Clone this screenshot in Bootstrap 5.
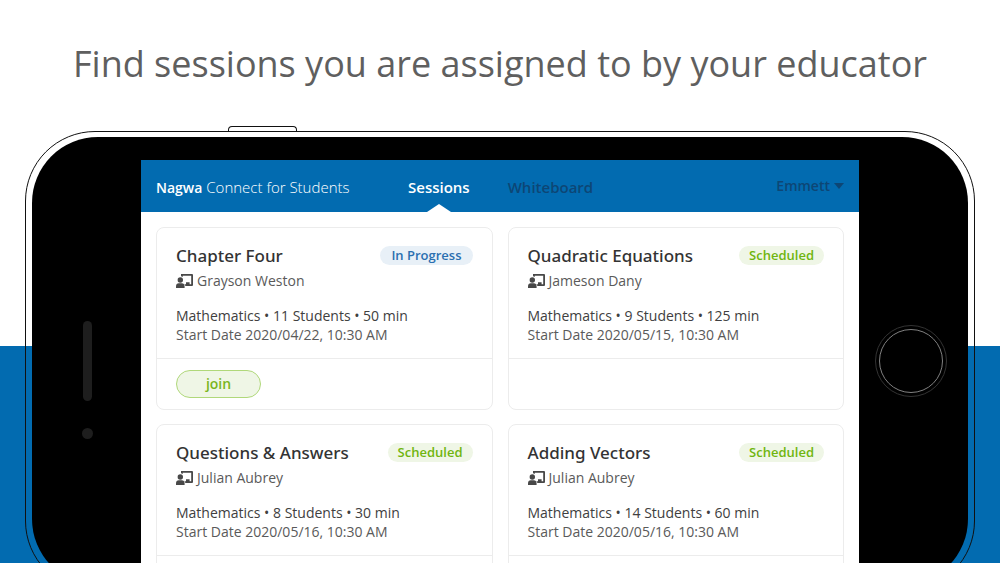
<!DOCTYPE html>
<html lang="en">
<head>
<meta charset="utf-8">
<meta name="viewport" content="width=device-width, initial-scale=1">
<title>Nagwa Connect for Students</title>
<link href="https://cdn.jsdelivr.net/npm/bootstrap@5.3.0/dist/css/bootstrap.min.css" rel="stylesheet">
<style>
  :root { --brand-blue: #026bb0; --line: #ececec; }
  body { font-family: "Open Sans", "Noto Sans", sans-serif; color: #333; }
  .stage { background: linear-gradient(#fff 346px, var(--brand-blue) 346px); }
  .headline { font-size: 36px; line-height: 48px; color: #5f5f5f; padding: 40px 0 38px; }
  .power-key { width: 69px; height: 5px; margin-left: 228px; border: 1px solid #111; border-bottom: 0; border-radius: 4px 4px 0 0; background: #fff; }
  .phone { margin: 0 25px; height: 460px; border: 1px solid #111; border-radius: 70px; padding: 5px 6px; }
  .phone-face { background: #000; border-radius: 66px; padding: 23px 0 22px; }
  .bezel { flex: 0 0 109px; padding: 0 0 1px 2px; }
  .speaker { width: 9px; height: 80px; background: #1e1e1e; border-radius: 5px; margin-top: 161px; }
  .camera { width: 11px; height: 11px; background: #1e1e1e; border-radius: 50%; margin-top: 27px; }
  .home-ring { width: 72px; height: 72px; border: 1px solid #333; border-radius: 50%; padding: 3px; margin-right: 21px; }
  .home-key { border: 1px solid #808080; border-radius: 50%; background: #000; }
  .app-bar { background: var(--brand-blue); height: 52px; padding: 0 15px; }
  .app-bar a { font-size: 15px; color: #0d4675; font-weight: 600; text-decoration: none; line-height: 54px; }
  .app-bar button { font-size: 14px; color: #0d4675; font-weight: 600; line-height: 54px; }
  .app-bar .app-name { color: #fff; font-weight: 300; width: 252px; font-size: 15px; white-space: nowrap; }
  .app-name b { font-weight: 600; font-size: 14px; }
  .app-bar a.current { color: #fff; }
  .current::after { content: ""; position: absolute; top: 44px; left: 50%; margin-left: -12px; border: 12px solid transparent; border-bottom: 8px solid #fff; border-top: 0; }
  .tabs { gap: 38px; }
  .caret { width: 0; border: 5px solid transparent; border-top: 6px solid #0d4675; border-bottom: 0; }
  .sessions { padding: 15px; gap: 14px 15px; display: grid; grid-template-columns: 1fr 1fr; }
  .session { border: 1px solid var(--line); border-radius: 8px; }
  .session-main { padding: 16px 19px 14px; }
  .session h2 { font-family: "Noto Sans", "Open Sans", sans-serif; font-size: 17px; line-height: 24px; font-weight: 500; }
  .teacher { font-size: 14px; line-height: 24px; color: #5a5a5a; gap: 4px; margin-bottom: 13px; padding-top: 1px; }
  .facts { font-size: 14px; line-height: 19px; color: #404040; }
  .starts { font-size: 14px; line-height: 19px; color: #5a5a5a; }
  .state { font-size: 13px; line-height: 19px; font-weight: 600; border-radius: 10px; padding: 0 10px; height: 19px; margin-top: 2px; }
  .state-live { background: #e8f0f7; color: #2a6fb0; padding: 0 11px; }
  .state-planned { background: #eff6e6; color: #70b50f; }
  .session-foot { border-top: 1px solid var(--line); height: 51px; padding: 11px 19px; }
  .join { width: 85px; height: 28px; border: 1px solid #b0d87a; border-radius: 14px; background: #eff6e6; color: #7ab51d; font-size: 14px; line-height: 20px; font-weight: 600; }
</style>
</head>
<body>
<svg class="d-none" aria-hidden="true">
  <symbol id="teacher-icon" viewBox="0 0 17 14">
    <path d="M5 0h11a1 1 0 0 1 1 1v10a1 1 0 0 1-1 1H9.500L8.300 10.200H10V8.300h3.600v1.900h1.600V1.800H6.800v1.100A3.600 3.600 0 0 0 5 2.200z"/>
    <circle cx="4.300" cy="6" r="2.700"/>
    <path d="M0 14v-1.600C0 10.500 1.100 9.300 2.800 9.300h3c1.700 0 2.800 1.200 2.800 3.100V14z"/>
  </symbol>
</svg>
<main class="stage vh-100 overflow-hidden">
  <h1 class="headline text-center fw-normal m-0">Find sessions you are assigned to by your educator</h1>
  <div class="power-key"></div>
  <div class="phone d-flex">
    <div class="phone-face d-flex flex-fill overflow-hidden">
      <div class="bezel d-flex flex-column align-items-center">
        <div class="speaker"></div>
        <div class="camera"></div>
      </div>
      <div class="bg-white flex-fill">
        <nav class="app-bar d-flex">
          <a class="app-name" href="#"><b>Nagwa</b> Connect for Students</a>
          <div class="tabs d-flex">
            <a class="current position-relative" href="#">Sessions</a>
            <a href="#">Whiteboard</a>
          </div>
          <button type="button" class="btn border-0 p-0 ms-auto d-flex align-items-center gap-1">Emmett<span class="caret"></span></button>
        </nav>
        <div class="sessions">
          <article class="session">
            <div class="session-main">
              <div class="d-flex justify-content-between"><h2 class="m-0">Chapter Four</h2><span class="state state-live">In Progress</span></div>
              <div class="teacher d-flex align-items-center"><svg width="17" height="14" fill="#484848"><use href="#teacher-icon"/></svg>Grayson Weston</div>
              <div class="facts">Mathematics • 11 Students • 50 min</div>
              <div class="starts">Start Date 2020/04/22, 10:30 AM</div>
            </div>
            <div class="session-foot"><button type="button" class="join p-0">join</button></div>
          </article>
          <article class="session">
            <div class="session-main">
              <div class="d-flex justify-content-between"><h2 class="m-0">Quadratic Equations</h2><span class="state state-planned">Scheduled</span></div>
              <div class="teacher d-flex align-items-center"><svg width="17" height="14" fill="#484848"><use href="#teacher-icon"/></svg>Jameson Dany</div>
              <div class="facts">Mathematics • 9 Students • 125 min</div>
              <div class="starts">Start Date 2020/05/15, 10:30 AM</div>
            </div>
            <div class="session-foot"></div>
          </article>
          <article class="session">
            <div class="session-main">
              <div class="d-flex justify-content-between"><h2 class="m-0">Questions &amp; Answers</h2><span class="state state-planned">Scheduled</span></div>
              <div class="teacher d-flex align-items-center"><svg width="17" height="14" fill="#484848"><use href="#teacher-icon"/></svg>Julian Aubrey</div>
              <div class="facts">Mathematics • 8 Students • 30 min</div>
              <div class="starts">Start Date 2020/05/16, 10:30 AM</div>
            </div>
            <div class="session-foot"></div>
          </article>
          <article class="session">
            <div class="session-main">
              <div class="d-flex justify-content-between"><h2 class="m-0">Adding Vectors</h2><span class="state state-planned">Scheduled</span></div>
              <div class="teacher d-flex align-items-center"><svg width="17" height="14" fill="#484848"><use href="#teacher-icon"/></svg>Julian Aubrey</div>
              <div class="facts">Mathematics • 14 Students • 60 min</div>
              <div class="starts">Start Date 2020/05/16, 10:30 AM</div>
            </div>
            <div class="session-foot"></div>
          </article>
        </div>
      </div>
      <div class="bezel d-flex align-items-center justify-content-end">
        <div class="home-ring d-flex"><div class="home-key flex-fill"></div></div>
      </div>
    </div>
  </div>
</main>
<script src="https://cdn.jsdelivr.net/npm/bootstrap@5.3.0/dist/js/bootstrap.bundle.min.js"></script>
</body>
</html>
